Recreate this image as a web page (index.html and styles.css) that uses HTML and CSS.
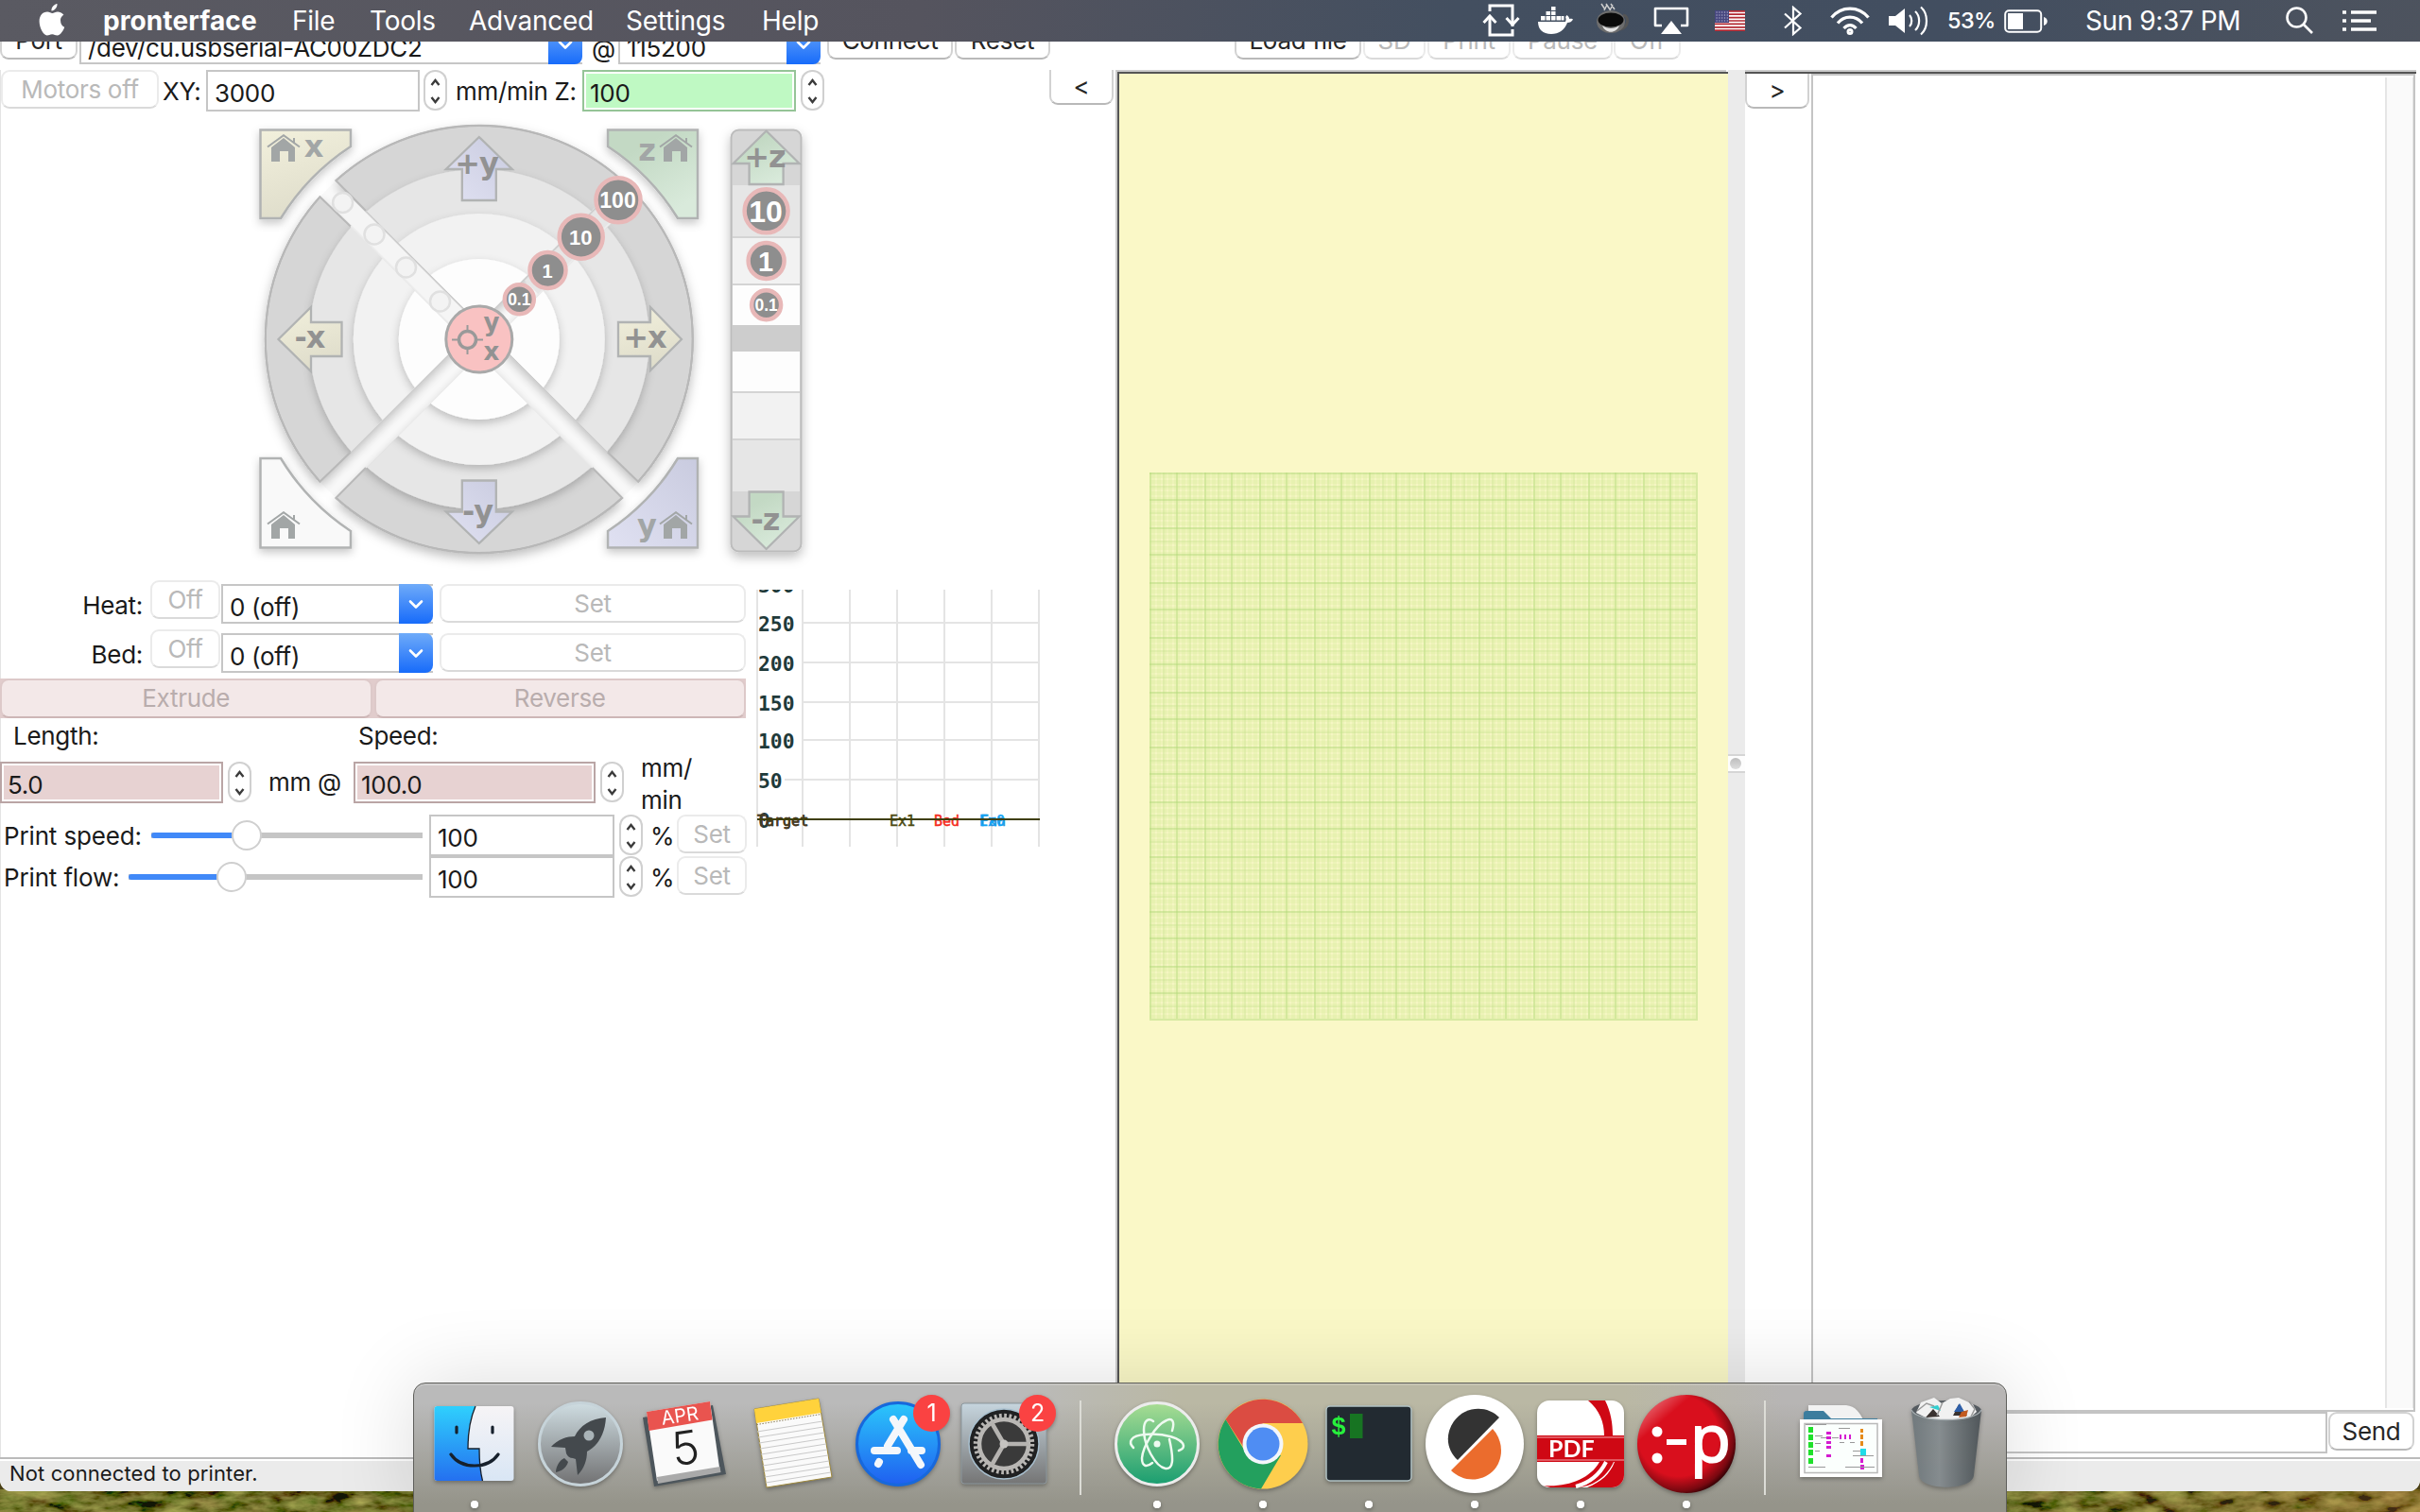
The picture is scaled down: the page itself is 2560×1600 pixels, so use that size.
FILE: index.html
```html
<!DOCTYPE html>
<html lang="en">
<head>
<meta charset="utf-8">
<title>pronterface</title>
<link rel="stylesheet" href="styles.css">
</head>
<body>
<svg class="defs" width="0" height="0" aria-hidden="true">
  <symbol id="updown" viewBox="0 0 25 43"><path d="M8.5 16l4-5 4 5M8.5 29l4 5 4-5" fill="none" stroke="#3c3c3c" stroke-width="2.4"/></symbol>
  <symbol id="chev" viewBox="0 0 36 42"><path d="M12 18.500l6 6 6-6" fill="none" stroke="#fff" stroke-width="2.6" stroke-linecap="round" stroke-linejoin="round"/></symbol>
  <symbol id="house" viewBox="0 0 36 30"><path d="M5 29V14L18 4l12 10v15h-7V18h-9v11z"/><path d="M1 13.500L18 1.200 35 13.500M29 4v6" fill="none" stroke="#a2a6a6" stroke-width="2"/></symbol>
</svg>

<svg class="wallpaper" width="2560" height="24">
  <defs>
    <filter id="grass" x="0" y="0" width="100%" height="100%">
      <feTurbulence type="fractalNoise" baseFrequency="0.035 0.09" numOctaves="4" seed="8"/>
      <feColorMatrix values="1.1 0.3 0 0 -0.44  0.9 0.5 0 0 -0.46  0.3 0.1 0 0 -0.16  0 0 0 0 1"/>
    </filter>
    <linearGradient id="earth"><stop offset=".83" stop-color="#3c4a12" stop-opacity=".3"/><stop offset="1" stop-color="#8a5a28" stop-opacity=".5"/></linearGradient>
  </defs>
  <rect width="2560" height="24" filter="url(#grass)"/>
  <rect width="2560" height="24" fill="url(#earth)"/>
</svg>

<header class="menubar">
  <svg class="apple" width="28" height="34" viewBox="0 0 28 34"><path fill="#fff" d="M19.500 0c.3 3.800-2.800 7.500-6 7.400C13 4 16 .6 19.500 0zM23 17.500c0-3.600 2.700-5.200 3.400-5.700-1.800-2.700-4.700-3.200-6-3.300-2.500-.2-4.600 1.500-6 1.500-1.300 0-3.200-1.400-5.300-1.400C4 8.700.6 12.500.6 18.600.6 25.500 5 33.500 8.700 33.500c2 0 3-1.300 5.500-1.300 2.400 0 3.200 1.300 5.300 1.300 3.600 0 6.900-6 7.700-8.700-2.300-.9-4.200-3.300-4.200-7.300z"/></svg>
  <nav class="menus">
    <b class="m-app">pronterface</b><span class="m-file">File</span><span class="m-tools">Tools</span><span class="m-adv">Advanced</span><span class="m-set">Settings</span><span>Help</span>
  </nav>
  <div class="tray">
    <svg width="40" height="36" viewBox="0 0 40 36" fill="none" stroke="#fff" stroke-width="3"><path d="M8 8V2h24v22M32 27v6H8V14"/><path d="M1.500 20L8 13l6.500 7M25.500 15l6.500 7 6.500-7" /></svg>
    <svg class="t-docker" width="38" height="30" viewBox="0 0 38 30" fill="#fff"><path d="M0 16h29c1-2 .5-4 0-5l1.500-2c2 1 2.500 3 2.500 4 2-.5 3.500 0 4 .5-1 2.500-3.500 3.500-6 3.500C28 25 22 29 14 29 5 29 0 24 0 16z"/><path d="M3 10h4.500v4.500H3zM8.500 10H13v4.500H8.500zM14 10h4.500v4.500H14zM19.500 10H24v4.500h-4.500zM8.500 5H13v4H8.500zM14 5h4.500v4H14zM14 0h4.500v4H14zM24.500 10h3v4.500h-3z"/></svg>
    <svg class="t-bowl" width="40" height="34" viewBox="0 0 40 34"><path d="M31 13c7 1 6 13-3 15" fill="none" stroke="#555" stroke-width="3"/><ellipse cx="18" cy="20" rx="15" ry="12" fill="#6d6d6d"/><ellipse cx="18" cy="18" rx="13.500" ry="7.500" fill="#0a0a0a"/><path d="M9 24c3 9 15 9 18 0-5 4-13 4-18 0z" fill="#e4e4e4"/><path d="M8 1l4 6M13 1l4 6M18 1l4 6M11 8l3-6M17 8l3-6" stroke="#ccc" stroke-width="1.500"/></svg>
    <svg class="t-air" width="38" height="30" viewBox="0 0 38 30"><path d="M9 20H2V2h34v18h-7" fill="none" stroke="#fff" stroke-width="2.600" stroke-linejoin="round"/><path d="M19 15l11 14H8z" fill="#fff"/></svg>
    <svg class="t-flag" width="32" height="22" viewBox="0 0 32 22"><path fill="#fff" d="M0 0h32v22H0z"/><path stroke="#b22a33" stroke-width="1.700" d="M0 .85h32M0 4.200h32M0 7.600h32M0 11h32M0 14.400h32M0 17.800h32M0 21.150h32"/><path fill="#46467f" d="M0 0h15v13H0z"/><path stroke="#c9c9dd" stroke-width="1.200" stroke-dasharray="1.200 1.600" d="M1.500 2h13M1.500 5h13M1.500 8h13M1.500 11h13"/></svg>
    <svg class="t-bt" width="20" height="32" viewBox="0 0 20 32" fill="none" stroke="#fff" stroke-width="2.200"><path d="M1 8.500l16.500 15L10 30V2l7.500 6.500L1 23.500"/></svg>
    <svg class="t-wifi" width="42" height="30" viewBox="0 0 42 30" fill="none" stroke="#fff" stroke-width="3.300"><path d="M1.500 11.500C12 -1 30 -1 40.500 11.500M8 17.500c7-8.500 19-8.500 26 0M14.500 23c4-4.500 9-4.500 13 0"/><circle cx="21" cy="26.500" r="2" stroke-width="3"/></svg>
    <svg class="t-vol" width="42" height="32" viewBox="0 0 42 32"><path fill="#fff" d="M0 11h7l10-8v26l-10-8H0z"/><path fill="none" stroke="#fff" stroke-width="2.200" d="M22 10c3 3 3 9 0 12M28 6c5.500 5 5.500 15 0 20M34 1.500c8 7 8 22 0 29"/></svg>
    <span class="t-pct">53%</span>
    <svg class="t-bat" width="46" height="25" viewBox="0 0 46 25"><rect x="1.200" y="1.200" width="38" height="22.500" rx="4" fill="none" stroke="#fff" stroke-width="2"/><path fill="#fff" d="M4 4h16v17H4zM42 8c5 1 5 8 0 9z"/></svg>
    <span class="t-clock">Sun 9:37 PM</span>
    <svg class="t-search" width="30" height="30" viewBox="0 0 30 30" fill="none" stroke="#fff" stroke-width="2.600"><circle cx="11.500" cy="11.500" r="10"/><path d="M18.500 18.500L28 28"/></svg>
    <svg class="t-list" width="36" height="22" viewBox="0 0 36 22"><path stroke="#fff" stroke-width="3.300" d="M0 2h4M9 2h27M0 11h4M9 11h21M0 20h4M9 20h27"/></svg>
  </div>
</header>

<main class="window">
  <div class="toolbar">
    <button class="btn w-port">Port</button>
    <div class="combo c-port"><span>/dev/cu.usbserial-AC00ZDC2</span><i><svg width="36" height="42"><use href="#chev"/></svg></i></div>
    <span class="at">@</span>
    <div class="combo c-baud"><span>115200</span><i><svg width="36" height="42"><use href="#chev"/></svg></i></div>
    <button class="btn w-connect">Connect</button>
    <button class="btn w-reset">Reset</button>
    <button class="btn w-load">Load file</button>
    <button class="btn off w-sd">SD</button>
    <button class="btn off w-print">Print</button>
    <button class="btn off w-pause">Pause</button>
    <button class="btn off w-off">Off</button>
  </div>

  <div class="panes">
    <section class="left">
      <div class="row feed">
        <button class="btn off w-motors">Motors off</button>
        <label class="l-xy">XY:</label>
        <div class="field f-xy">3000</div>
        <svg class="spin" width="25" height="43"><use href="#updown"/></svg>
        <label class="l-z">mm/min Z:</label>
        <div class="field tint green f-z"><span>100</span></div>
        <svg class="spin" width="25" height="43"><use href="#updown"/></svg>
        <button class="btn fold">&lt;</button>
      </div>

      <svg class="jog" width="600" height="496" viewBox="260 118 600 496">
        <defs>
          <filter id="sh" x="-20%" y="-20%" width="140%" height="140%"><feDropShadow dx="0" dy="5" stdDeviation="6" flood-color="#000" flood-opacity=".26"/></filter>
          <filter id="shs" x="-20%" y="-20%" width="140%" height="140%"><feDropShadow dx="0" dy="4" stdDeviation="5" flood-color="#000" flood-opacity=".22"/></filter>
          <linearGradient id="yel" x1="0" y1="0" x2=".3" y2="1"><stop stop-color="#f2f0dc"/><stop offset="1" stop-color="#dfddcb"/></linearGradient>
          <linearGradient id="grn" x1="0" y1="0" x2=".6" y2="1"><stop offset=".3" stop-color="#c3d9c4"/><stop offset="1" stop-color="#d9eadb"/></linearGradient>
          <linearGradient id="blu" x1="1" y1="0" x2="0" y2="1"><stop stop-color="#c9cbdf"/><stop offset="1" stop-color="#e0e1f2"/></linearGradient>
          <clipPath id="quads"><path d="M506.800 342L206.800 42h600zM506.800 376l-300 300h600zM489.800 359l-300-300v600zM523.800 359l300-300v600z"/></clipPath>
          <clipPath id="disc"><circle cx="506.800" cy="359" r="226"/></clipPath>
        </defs>
        <g clip-path="url(#disc)"><path d="M346.800 199l320 320M666.800 199l-320 320" stroke="#fafafa" stroke-width="30"/></g>
        <g filter="url(#sh)">
          <g clip-path="url(#quads)">
            <circle cx="506.800" cy="359" r="226" fill="#d6d6d6" stroke="#b4b4b4" stroke-width="2"/>
            <g filter="url(#shs)"><circle cx="506.800" cy="359" r="180" fill="#e6e6e6"/></g>
            <g filter="url(#shs)"><circle cx="506.800" cy="359" r="133" fill="#f2f2f2"/></g>
            <g filter="url(#shs)"><circle cx="506.800" cy="359" r="85" fill="#fdfdfd"/></g>
          </g>
        </g>
        <g fill="none" stroke="#b8b8b8" stroke-width="2">
          <path d="M387 223L355.300 191A226 226 0 0 1 658.300 191M370.800 239.500L338.400 208.300A226 226 0 0 0 338.400 509.700L370.800 478.500M387 495L355.300 527A226 226 0 0 0 658.300 527L626.600 495M642.800 478.500L675.200 509.700A226 226 0 0 0 675.200 208.300"/>
        </g>
        <path d="M362 214l120 120" stroke="#f5f5f5" stroke-width="20" stroke-linecap="round"/>
        <path d="M562 304L664 202" stroke="#e6e6e6" stroke-width="20"/>
        <g fill="#f3f3f3" stroke="#e0e0e0" stroke-width="2.500"><circle cx="362.600" cy="214.500" r="10.500"/><circle cx="396" cy="248" r="10.500"/><circle cx="429.500" cy="283" r="10.500"/><circle cx="465.500" cy="319" r="10.500"/></g>
        <g filter="url(#shs)" stroke="#b1b3b3" stroke-width="2.500">
          <path fill="url(#yel)" d="M275.500 137.500H371V155A245 245 0 0 0 297 231H275.500z"/>
          <path fill="url(#grn)" d="M738 137.500H643V155A245 245 0 0 1 717 231H738z"/>
          <path fill="#f9f9f9" d="M275.500 579.500H371V562A245 245 0 0 1 297 485H275.500z"/>
          <path fill="url(#blu)" d="M738 579.500H643V562A245 245 0 0 0 717 485H738z"/>
        </g>
        <g stroke="#b1b3b3" stroke-width="2.300">
          <path fill="url(#blu)" d="M506.800 145l35 34h-17v33h-36v-33h-17z"/>
          <path fill="url(#blu)" d="M506.800 575l35-33.500h-17v-33h-36v33h-17z"/>
          <path fill="url(#yel)" d="M721 359l-33-34v16h-34v36h34v15z"/>
          <path fill="url(#yel)" d="M294.500 359l34.500-34v16h32.500v36H329v16z"/>
        </g>
        <g filter="url(#sh)">
          <rect x="773.500" y="137.500" width="74" height="446" rx="8" fill="#d6d6d6" stroke="#bcbcbc" stroke-width="2"/>
        </g>
        <path fill="#e6e6e6" d="M775 196h71v54h-71zM775 465h71v55h-71z"/><path fill="#f2f2f2" d="M775 251h71v50h-71zM775 415h71v50h-71z"/><path fill="#fdfdfd" d="M775 302h71v42h-71zM775 372h71v42h-71z"/><path fill="#cdcdcd" d="M775 344h71v28h-71z"/>
        <path stroke="#d4d4d4" stroke-width="2" d="M775 251h71M775 301h71M775 415h71M775 465h71"/>
        <g stroke="#b1b3b3" stroke-width="2.300" fill="url(#grn)"><path d="M810.600 138.500l35 34.500h-17v22h-36v-22h-17z"/><path d="M810.600 581l35-34.500h-17v-26h-36v26h-17z"/></g>
        <circle cx="506.800" cy="359" r="35" fill="#f9c2c2" stroke="#a9a9a9" stroke-width="3"/>
        <g fill="none" stroke="#999"><circle cx="494.500" cy="359.500" r="9" stroke-width="3.500"/><path stroke-width="2" d="M494.500 344v8M494.500 367v8M478 359.500h8M503 359.500h8"/></g>
        <g fill="#8e8e8e" stroke="#e8b8b8" stroke-width="4.500">
          <circle cx="654" cy="211.700" r="23.500"/><circle cx="614.700" cy="250.700" r="23"/><circle cx="579.500" cy="286" r="19"/><circle cx="549.300" cy="316.700" r="15.500"/>
          <circle cx="810.600" cy="223.300" r="23"/><circle cx="810.600" cy="276" r="19"/><circle cx="810.600" cy="322.700" r="15.500"/>
        </g>
        <g class="step">
          <text x="653.500" y="220" font-size="23">100</text><text x="614.300" y="259" font-size="22">10</text><text x="579" y="293.500" font-size="20">1</text><text x="549.300" y="323" font-size="17.500">0.1</text>
          <text x="810" y="235" font-size="32">10</text><text x="810" y="286.500" font-size="29">1</text><text x="810.600" y="329" font-size="17.500">0.1</text>
        </g>
        <g class="axis">
          <text x="504" y="184">+y</text><text x="505" y="552">-y</text><text x="682" y="368">+x</text><text x="327.500" y="368">-x</text><text x="809" y="176.500">+z</text><text x="809.500" y="561">-z</text>
          <text x="331.500" y="166" fill="#a2a6a6">x</text><text x="684" y="170" fill="#a2a6a6">z</text><text x="684" y="567" fill="#a2a6a6">y</text>
          <text x="519.500" y="349.500" font-size="26">y</text><text x="519.500" y="380.500" font-size="26">x</text>
        </g>
        <g fill="#a2a6a6"><use href="#house" x="282" y="142" width="36" height="30"/><use href="#house" x="697" y="142" width="36" height="30"/><use href="#house" x="282" y="541" width="36" height="30"/><use href="#house" x="697" y="541" width="36" height="30"/></g>
      </svg>

      <div class="lower">
        <div class="controls">
          <div class="row heat">
            <label class="l-heat">Heat:</label><button class="btn off w-hoff">Off</button>
            <div class="combo c-temp"><span>0 (off)</span><i><svg width="36" height="42"><use href="#chev"/></svg></i></div>
            <button class="btn off w-hset">Set</button>
          </div>
          <div class="row heat">
            <label class="l-heat">Bed:</label><button class="btn off w-hoff">Off</button>
            <div class="combo c-temp"><span>0 (off)</span><i><svg width="36" height="42"><use href="#chev"/></svg></i></div>
            <button class="btn off w-hset">Set</button>
          </div>
          <div class="extrude"><button class="btn off">Extrude</button><button class="btn off">Reverse</button></div>
          <div class="row caps"><label>Length:</label><label class="l-speed">Speed:</label></div>
          <div class="row amount">
            <div class="field tint rose f-len"><span>5.0</span></div><svg class="spin" width="25" height="43"><use href="#updown"/></svg>
            <label class="l-mm">mm @</label>
            <div class="field tint rose f-speed"><span>100.0</span></div><svg class="spin" width="25" height="43"><use href="#updown"/></svg>
            <label class="l-mmin">mm/<br>min</label>
          </div>
          <div class="row rate">
            <label class="l-ps">Print speed:</label><div class="slider s-speed"><b></b><i></i></div>
            <div class="field f-rate">100</div><svg class="spin" width="25" height="43"><use href="#updown"/></svg><label class="l-pct">%</label><button class="btn off w-rset">Set</button>
          </div>
          <div class="row rate">
            <label class="l-pf">Print flow:</label><div class="slider s-flow"><b></b><i></i></div>
            <div class="field f-rate">100</div><svg class="spin" width="25" height="43"><use href="#updown"/></svg><label class="l-pct">%</label><button class="btn off w-rset">Set</button>
          </div>
        </div>
        <svg class="graph" width="304" height="272" viewBox="800 624 304 272">
          <path stroke="#e4e4e4" stroke-width="2" d="M801 624v272M849 624v272M899 624v272M949 624v272M999 624v272M1049 624v272M1099 624v272M850 659h250M850 701h250M850 743h250M850 783h250M830 825h270"/>
          <g class="ticks"><text x="802" y="627">300</text><text x="802" y="668">250</text><text x="802" y="710">200</text><text x="802" y="752">150</text><text x="802" y="792">100</text><text x="802" y="834">50</text><text x="802" y="876">0</text></g>
          <g class="series"><text x="801" y="874" fill="#6a4a6a" stroke="#6a4a6a">Target</text><text x="801" y="873.500" fill="#453c1c" stroke="#453c1c">Target</text><text x="941" y="874" fill="#4d4a12" stroke="#4d4a12">Ex1</text><text x="988" y="874" fill="#f52a20" stroke="#f52a20">Bed</text><text x="1037" y="874" fill="#2a8fd8" stroke="#2a8fd8">Fan</text><text x="1036" y="874" fill="#10a4f6" stroke="#10a4f6">Ex0</text></g>
          <path stroke="#3f3f0c" stroke-width="2" d="M801 867h299"/>
        </svg>
      </div>
    </section>

    <section class="viz">
      <svg width="580" height="580" shape-rendering="crispEdges">
        <defs>
          <pattern id="bars" width="58" height="58" patternUnits="userSpaceOnUse">
            <path fill="#cfe793" fill-opacity=".22" d="M0 0h6v58H0zM8 0h4v58H8zM14 0h4v58h-4zM20 0h4v58h-4zM26 0h6v58h-6zM34 0h4v58h-4zM40 0h4v58h-4zM46 0h4v58h-4zM52 0h4v58h-4z"/>
            <path fill="#b8dc80" fill-opacity=".2" d="M14 0h2v58h-2zM42 0h2v58h-2z"/>
            <path fill="#aad472" fill-opacity=".36" d="M0 0h2v58H0zM28 0h2v58h-2z"/>
          </pattern>
          <pattern id="rows" width="58" height="58" patternUnits="userSpaceOnUse" patternTransform="matrix(0 1 1 0 0 0)">
            <path fill="#cfe793" fill-opacity=".22" d="M0 0h6v58H0zM8 0h4v58H8zM14 0h4v58h-4zM20 0h4v58h-4zM26 0h6v58h-6zM34 0h4v58h-4zM40 0h4v58h-4zM46 0h4v58h-4zM52 0h4v58h-4z"/>
            <path fill="#b8dc80" fill-opacity=".2" d="M14 0h2v58h-2zM42 0h2v58h-2z"/>
            <path fill="#aad472" fill-opacity=".36" d="M0 0h2v58H0zM28 0h2v58h-2z"/>
          </pattern>
        </defs>
        <rect width="580" height="580" fill="#d9edaa" fill-opacity=".14"/>
        <rect width="580" height="580" fill="url(#bars)"/><rect width="580" height="580" fill="url(#rows)"/>
        <path d="M579 0v580M0 579h580" stroke="#d7e9a2" stroke-width="2"/>
      </svg>
    </section>
    <div class="sash"><div class="grip"><i></i></div></div>
    <section class="right">
      <div class="gutter"><button class="btn fold">&gt;</button></div>
      <div class="log">
        <div class="console"><div class="scroll"></div></div>
        <div class="prompt"><div class="cmd"></div><button class="btn w-send">Send</button></div>
      </div>
    </section>
  </div>
  <footer class="status">Not connected to printer.</footer>
</main>

<div class="dock">
  <svg class="app on" viewBox="0 0 112 137"><defs><linearGradient id="fb" x2="0" y2="1"><stop stop-color="#2fd0fd"/><stop offset="1" stop-color="#2470f0"/></linearGradient><linearGradient id="fw" x2="0" y2="1"><stop stop-color="#f6f4f6"/><stop offset="1" stop-color="#d9e6f5"/></linearGradient></defs>
    <rect x="13.500" y="24" width="84" height="79" rx="3" fill="url(#fw)"/><path fill="url(#fb)" d="M16.500 24H57c-7 16-8 32-8 45h12c0 12 1 24 3.500 34h-48a3 3 0 0 1-3-3V27a3 3 0 0 1 3-3z"/><path fill="none" stroke="#16202c" stroke-width="1.300" d="M57 24c-7 16-8 32-8 45h12c0 12 1 24 3.500 34"/><path fill="none" stroke="#16202c" stroke-width="3.200" stroke-linecap="round" d="M37 46v6M75 46v6M31 75c11 16 39 16 50 0"/></svg>
  <svg class="app" viewBox="0 0 112 137"><defs><linearGradient id="lp" x2="0" y2="1"><stop stop-color="#cfdde2"/><stop offset="1" stop-color="#717172"/></linearGradient></defs>
    <circle cx="56" cy="64" r="43.500" fill="url(#lp)" stroke="#c6d3d9" stroke-width="3"/><path fill="#44494d" d="M83 36c-16 1-28 9-33 20-8 0-18 3-25 11l15 1 1 6c1 3 4 5 7 5l3 1 2 17c7-7 10-16 10-25 12-6 19-19 20-36zM39 79c-5 2-9 9-9 15 5-1 11-4 13-11z"/><circle cx="65" cy="55" r="5.500" fill="#a9b3b7"/></svg>
  <svg class="app" viewBox="0 0 112 137"><path fill="#4d565c" d="M10 36l74-13 14 73-76 13z"/><path fill="#fafafa" d="M14 30l67-11 10.500 73L25 103z"/><path fill="#aaa" d="M25 99l66.500-11 1 6L26 106z"/><path fill="#e9544f" d="M14 30l67-11 2.500 19.500L16.500 50z"/><g transform="rotate(-8 50 40)"><text class="cal-m" x="50" y="41">APR</text><text class="cal-d" x="51" y="86">5</text></g></svg>
  <svg class="app" viewBox="0 0 112 137"><path fill="#fafafa" stroke="#a08a3c" stroke-width="1" d="M16 27l68-11 14 83-69 11z"/><path fill="#ffd23c" d="M16 27l68-11 2.500 15L18 42z"/><path stroke="#8a7a50" stroke-dasharray="1.500 1.500" d="M18.500 43.500l68-11"/><path stroke="#c9c9c9" d="M19 51l69-11M20 57l69-11M21 63l69-11M22 69l69-11M23 75l69-11M24 81l69-11M25 87l69-11M26 93l69-11M27 99l69-11M28 105l69-11"/></svg>
  <svg class="app" viewBox="0 0 112 137"><defs><linearGradient id="as" x2="0" y2="1"><stop stop-color="#2bc7fb"/><stop offset="1" stop-color="#1f5ff0"/></linearGradient></defs><circle cx="56" cy="64" r="43.500" fill="url(#as)" stroke="#1768dc" stroke-width="3"/><g stroke="#f4f7fb" stroke-width="8" stroke-linecap="round" fill="none"><path d="M62 38L45 66M51 38l29 48M31 71h24M70 71h11M36 83l-1 2"/></g><circle cx="91.500" cy="31.500" r="19.500" fill="#fa4242"/><text class="badge" x="91.500" y="40">1</text></svg>
  <svg class="app" viewBox="0 0 112 137"><defs><linearGradient id="sp" x2="0" y2="1"><stop stop-color="#c6d5de"/><stop offset="1" stop-color="#757575"/></linearGradient></defs><rect x="11" y="21" width="90" height="85" rx="3" fill="url(#sp)" stroke="#8b979d"/><circle cx="56" cy="64" r="37" fill="#202122" stroke="#a9c0cf" stroke-width="1.500"/><circle cx="56" cy="64" r="26" fill="#3a3a3a" stroke="#b9b7b4" stroke-width="4.500"/><circle cx="56" cy="64" r="30" fill="none" stroke="#b9b7b4" stroke-width="4.500" stroke-dasharray="2.700 2.536"/><path stroke="#b5b3b0" stroke-width="4.500" d="M56 64h26M56 64L43 41.500M56 64L43 86.500"/><circle cx="56" cy="64" r="4.500" fill="#c5c3c0"/><circle cx="91.500" cy="31.500" r="19.500" fill="#fa4242"/><text class="badge" x="91.500" y="40">2</text></svg>
  <div class="sep"></div>
  <svg class="app on" viewBox="0 0 112 137"><defs><linearGradient id="at" x2="0" y2="1"><stop stop-color="#a9dd93"/><stop offset="1" stop-color="#199d70"/></linearGradient></defs><circle cx="56" cy="64" r="43.500" fill="url(#at)" stroke="#ececec" stroke-width="3"/><g fill="none" stroke="#eefaf0" stroke-width="2.500" stroke-linecap="round"><path d="M31 68c-6-6-3-13 12-14 20-2 40 4 41 12 0 2-2 4-5 5"/><path d="M72 50c3-10 0-14-6-11-12 5-25 28-26 40 0 9 5 10 11 5"/><path d="M52 40c-5-4-10-1-10 9 0 16 12 39 23 41 8 1 9-9 4-31"/></g><circle cx="56" cy="64" r="3.500" fill="#eefaf0"/></svg>
  <svg class="app on" viewBox="0 0 112 137"><circle cx="56" cy="64" r="47.500" fill="#fece4d"/><path fill="#db4c42" d="M16.500 38A47.500 47.500 0 0 1 98 42H56L36 68z"/><path fill="#23a05e" d="M16.500 38A47.500 47.500 0 0 0 54 111.500L75 76 36 70z"/><circle cx="56" cy="64" r="21.500" fill="#f3f6fb"/><circle cx="56" cy="64" r="17.500" fill="#4f8df3"/></svg>
  <svg class="app on" viewBox="0 0 112 137"><rect x="11" y="24" width="90" height="79" rx="4" fill="#222a31" stroke="#b3c3c5" stroke-width="1.500"/><rect x="36" y="32" width="13.500" height="26" fill="#177422"/><text class="term" x="16" y="54">$</text></svg>
  <svg class="app on" viewBox="0 0 112 137"><circle cx="56" cy="64" r="52" fill="#fff"/><path fill="#333" d="M82 36C70 23 46 23 34 40c-11 16-6 32 4 41z"/><path fill="#eb6c2d" d="M75 48c12 13 12 33 0 45-13 12-32 11-44-1z"/></svg>
  <svg class="app on" viewBox="0 0 112 137"><rect x="10" y="18" width="92" height="92" rx="13" fill="#fff"/><path fill="#cf0814" d="M64 18h18c6 12 8 24 8 37h-9c0-14-5-27-17-37zM10 55h92v28H10zM76 83h15c-6 14-20 25-36 27H24l-7-2c25 2 49-7 59-25z"/><path fill="#cf0814" d="M92 83h10v14a13 13 0 0 1-13 13H63c15-6 24-14 29-27z"/><path stroke="#f4a6aa" stroke-width="1" d="M10 57h92M10 81h92"/><path stroke="#fff" stroke-width="4" fill="none" d="M83 83c-6 12-17 22-32 26"/><text class="pdf" x="22" y="78">PDF</text></svg>
  <svg class="app on" viewBox="0 0 112 137"><defs><radialGradient id="pp" cx=".42" cy=".42" r=".62"><stop offset=".66" stop-color="#d90f1d"/><stop offset=".9" stop-color="#780810"/><stop offset="1" stop-color="#2b0003"/></radialGradient><linearGradient id="ph" x2=".6" y2=".7"><stop stop-color="#fff" stop-opacity=".6"/><stop offset=".4" stop-color="#fff" stop-opacity="0"/></linearGradient></defs><circle cx="56" cy="64" r="52" fill="url(#pp)"/><circle cx="56" cy="64" r="52" fill="url(#ph)"/><g fill="#fff"><circle cx="25" cy="51" r="5.500"/><circle cx="25" cy="79" r="5.500"/><path d="M35 59h21v6H35z"/></g><text class="pee" x="60" y="83">p</text></svg>
  <div class="sep sep-end"></div>
  <svg class="app" viewBox="0 0 112 137"><path fill="#f2f2f2" d="M22 23h40c10 1 14 8 18 15H22z"/><path fill="#3c7d9e" d="M17 32a3 3 0 0 1 3-3h18l8 8h49v8H17z"/><rect x="13" y="38" width="87" height="61" fill="#fff"/><rect x="18" y="42.500" width="77" height="52" fill="#fbfffd" stroke="#b9b9b9" stroke-width="1.500"/><path fill="#1fe02b" d="M22 46h5v6h-5zM22 54h5v6h-5zM22 62h5v6h-5zM22 70h5v6h-5zM22 79h5v6h-5z"/><path fill="#d41bd0" d="M41 51h5v3h-5zM41 56h5v3h-5zM41 61h5v3h-5zM41 66h5v3h-5zM41 75h5v3h-5zM55 54h2v5h-2zM60 54h2v5h-2zM65 54h2v5h-2zM77 79h3v5h-3zM77 86h4v5h-4z"/><path fill="#e58a1a" d="M77 48h3v4h-3zM77 54h3v5h-3zM77 61h3v5h-3z"/><path fill="#22dbe8" d="M77 69h6v8h-6z"/><path stroke="#999" d="M19 43.500h22M29 55.500h8M29 63.500h6M35 57.500h6M47 57.500h7M29 71.500h5M69 71.500h8M69 76.500h22M61 88.500h31M54 47.500h12M55 62.500h5M66 62.500h5M22 88.500h18"/></svg>
  <svg class="app" viewBox="0 0 112 137"><defs><linearGradient id="tr"><stop stop-color="#6f787c"/><stop offset=".4" stop-color="#868d90"/><stop offset="1" stop-color="#4c5357"/></linearGradient></defs><ellipse cx="56" cy="29" rx="37" ry="11" fill="#555b60"/><path fill="#f1f1f1" d="M24 31l5-11 14-5 8 6 9-5 9-1 15 7 4 8-9 8H38z"/><path fill="#3a3230" d="M34 36l8-9 7 8zM63 34l6-12 9 12z"/><path fill="#2e5fa8" d="M64 30l6-9 5 9z"/><path fill="#32cfd0" d="M38 25l9-2 3 6z"/><path fill="#c25a20" d="M72 30l7-2-2 7-8 1z"/><path stroke="#999" stroke-width="1.500" fill="none" d="M25 29l10-8 8 3M80 19l6 8-4 8M52 20l-6 14"/><path fill="url(#tr)" fill-opacity=".95" d="M19 28c6 14 68 14 74 0l-8 69c-1 17-57 17-58 0z"/><path fill="none" stroke="#a3abae" stroke-width="1.300" d="M19 28c6 14 68 14 74 0"/></svg>
</div>
</body>
</html>
```
FILE: styles.css
```css
* { box-sizing: border-box; }
body {
  margin: 0; width: 2560px; height: 1600px; overflow: hidden; position: relative;
  display: flex; flex-direction: column;
  font: 26px/32px Inter, "Liberation Sans", sans-serif; letter-spacing: -0.3px; color: #1a1a1a; background: #4a4016;
}
svg { display: block; flex: none; }
.defs { position: absolute; }
.wallpaper { position: absolute; left: 0; bottom: 0; }

/* menu bar */
.menubar { height: 44px; flex: none; display: flex; align-items: center; color: #fff; font-size: 28px; letter-spacing: -0.25px;
  background: linear-gradient(100deg, #5a5a62 0, #55545e 38%, #434f60 60%, #424e60 80%, #4d535e 100%); position: relative; }
.apple { margin: -3px 40px 0 41px; }
.menus { display: flex; white-space: nowrap; }
.m-app { width: 200px; font-weight: 700; letter-spacing: 0.1px; }
.m-file { width: 82px; } .m-tools { width: 105px; } .m-adv { width: 166px; } .m-set { width: 144px; }
.tray { display: flex; align-items: center; margin-left: auto; padding-right: 46px; white-space: nowrap; }
.t-docker { margin-left: 19px; } .t-bowl { margin-left: 21px; margin-top: -5px; } .t-air { margin-left: 23px; }
.t-flag { margin-left: 27px; } .t-bt { margin-left: 41px; } .t-wifi { margin-left: 29px; } .t-vol { margin-left: 20px; }
.t-pct { margin-left: 20px; width: 60px; font-size: 23.500px; font-weight: 500; letter-spacing: -0.6px; }
.t-clock { margin-left: 40px; width: 166px; font-size: 28px; letter-spacing: -0.4px; }
.t-search { margin-left: 46px; } .t-list { margin-left: 30px; }

/* window */
.window { height: 1534px; display: flex; flex-direction: column; background: #fff; border-radius: 0 0 12px 12px; overflow: hidden; position: relative; }
.row { display: flex; align-items: flex-start; }
label { white-space: nowrap; flex: none; }
.btn { height: 41px; flex: none; padding: 0; font: inherit; letter-spacing: inherit; color: #262626; background: #fff; white-space: nowrap;
  border: 2px solid #d2d2d2; border-bottom-color: #b9b9b9; border-radius: 9px; }
.btn.off { color: #b9b9b9; border-color: #ebebeb; border-bottom-color: #dadada; }
.combo { height: 42px; flex: none; display: flex; justify-content: space-between; border: 2px solid #c6c6c6; border-right: 0; background: #fff; }
.combo span { padding: 7px 0 0 7px; white-space: nowrap; }
.combo i { width: 36px; height: 42px; margin-top: -2px; border-radius: 0 8px 8px 0; background: linear-gradient(#6fabf9, #176bfa); }
.field { height: 44px; flex: none; border: 2px solid #c6c6c6; padding: 7px 0 0 7px; background: #fff; }
.spin { border-radius: 12px; background: #fff; box-shadow: inset 0 0 0 2px #d0d0d0; margin-left: 4px; }
.tint { padding: 2px; }
.tint span { display: block; height: 36px; padding: 5px 0 0 4px; }
.green { border-color: #95c497; } .green span { background: #bff9c3; }
.rose { border-color: #baa5a5; } .rose span { background: #e7d2d2; }

.toolbar { height: 30px; flex: none; display: flex; align-items: flex-end; padding-bottom: 6px; }
.toolbar .btn { margin-bottom: 5px; padding-top: 1px; }
.w-port { width: 82px; } .c-port { width: 532px; margin-left: 2px; } .at { width: 38px; padding-left: 10px; }
.c-baud { width: 214px; } .w-connect { width: 133px; margin-left: 7px; } .w-reset { width: 101px; margin-left: 2px; }
.w-load { width: 134px; margin-left: 195px; } .w-sd { width: 66px; margin-left: 2px; } .w-print { width: 88px; margin-left: 2px; }
.w-pause { width: 106px; margin-left: 2px; } .w-off { width: 71px; margin-left: 1px; }

.panes { height: 1468px; flex: none; display: flex; }
.left { width: 1180px; flex: none; border-left: 1px solid #e4e4e4; }
.feed { height: 44px; }
.feed label { padding-top: 7px; }
.w-motors { width: 167px; } .l-xy { width: 50px; padding-left: 4px; } .f-xy { width: 226px; }
.l-z { width: 143px; padding-left: 9px; } .f-z { width: 226px; }
.fold { width: 68px; height: 37px; border-top: 0; border-radius: 0 0 9px 9px; }
.feed .fold { margin: 0 2px 0 auto; }
.feed .f-z + .spin { margin-left: 5px; }
.jog { margin-left: 259px; }
.step { font-family: "Liberation Sans"; font-weight: 700; fill: #fff; text-anchor: middle; letter-spacing: 0; }
.axis { font-family: "DejaVu Sans"; font-weight: 700; font-size: 32px; fill: #929292; text-anchor: middle; letter-spacing: -1px; }

.lower { display: flex; margin-left: -1px; }
.controls { width: 800px; flex: none; }
.heat { height: 52px; }
.heat .combo, .w-hset { margin-top: 4px; }
.l-heat { width: 151px; text-align: right; padding-top: 11px; }
.w-hoff { width: 74px; margin-left: 8px; } .c-temp { width: 224px; margin-left: 1px; } .w-hset { width: 324px; margin-left: 7px; }
.extrude { height: 42px; width: 789px; display: grid; grid-template-columns: 1fr 1fr; gap: 2px; background: #e1cccc; padding: 0; }
.extrude .btn.off { background: #f3e8e8; color: #b9adad; border-color: #ddc9c9; border-bottom-color: #cdb6b6; height: 42px; }
.caps { height: 46px; padding: 3px 0 0 14px; }
.l-speed { margin-left: auto; width: 421px; }
.amount { height: 56px; }
.f-len { width: 236px; } .amount .spin { margin-left: 5px; }
.l-mm { width: 108px; padding: 6px 0 0 18px; } .f-speed { width: 256px; }
.l-mmin { margin: -10px 0 0 18px; line-height: 34px; }
.rate { height: 44px; }
.rate label { padding-top: 7px; }
.l-ps { width: 160px; } .l-pf { width: 136px; }
.rate label:first-child { padding-left: 4px; letter-spacing: -0.15px; }
.slider { height: 43px; display: flex; align-items: center; flex: none; margin-right: 7px;
  background: linear-gradient(#c5c5c5, #c5c5c5) 0 50% / 100% 6px no-repeat; }
.s-speed { width: 287px; } .s-flow { width: 311px; }
.slider b { height: 6px; background: #4189f8; border-radius: 3px 0 0 3px; }
.s-speed b { width: 85px; } .s-flow b { width: 93px; }
.slider i { width: 32px; height: 32px; border-radius: 50%; background: #fff; border: 2px solid #cfcfcf; }
.f-rate { width: 196px; } .rate .spin { margin-left: 5px; } .l-pct { width: 36px; } .rate .l-pct { padding-left: 8px; } .w-rset { width: 74px; }
.graph { margin-top: 10px; }
.ticks { font: 700 21.300px "DejaVu Sans Mono"; letter-spacing: 0; fill: #1f3a3a; }
.series { font: 15px "DejaVu Sans Mono"; letter-spacing: 0; stroke-width: .5px; }

.viz { width: 646px; flex: none; margin: 2px 0 0 2px; padding: 422px 0 0 32px; background: #faf8c7;
  border: solid #555; border-width: 2px 0 0 2px; box-shadow: -2px -2px #ccc; }
.sash { width: 18px; flex: none; background: #ebebeb; padding-top: 724px; }
.grip { height: 20px; border: solid #d5d5d5; border-width: 2px 0; background: #fdfdfd; padding: 2px 0 0 2px; }
.grip i { display: block; width: 12px; height: 12px; border-radius: 50%; background: linear-gradient(#bdbdbd, #dedede); }
.right { width: 710px; flex: none; display: flex; border-top: 2px solid #555; margin-top: 2px; box-shadow: 0 -2px #ccc; }
.gutter { width: 70px; flex: none; }
.log { width: 639px; }
.console { height: 1416px; border: 2px solid #c4c4c4; padding: 2px 0 2px; display: flex; justify-content: flex-end; }
.scroll { width: 30px; background: #fafafa; border: solid #e6e6e6; border-width: 0 1px 0 2px; }
.prompt { display: flex; height: 44px; }
.cmd { width: 546px; border: 2px solid #c4c4c4; }
.w-send { width: 91px; margin: 0 0 0 1px; }
.status { flex: 1; border-top: 2px solid #bbb; box-shadow: inset 0 2px #fff; background: #ebebeb; padding: 0 0 0 10px; font-size: 22px; line-height: 30px; letter-spacing: 0.12px; }

/* dock */
.dock { position: absolute; left: 437px; top: 1463px; width: 1686px; height: 140px; display: flex; padding-left: 8px;
  border: 1px solid #5e5e5a; border-radius: 13px 13px 0 0;
  background: linear-gradient(rgba(150,149,138,0) 15%, #95948a 92%), linear-gradient(to right, #bababa 0 38%, #bab8a4 48% 76%, #b7b5b4 86%);
  box-shadow: inset 0 2px rgba(255,255,255,.16), 0 0 85px rgba(0,0,0,.14); }
.app { width: 112px; height: 137px; filter: drop-shadow(0 2px 2px rgba(0,0,0,.3)); letter-spacing: 0; }
.on { background: radial-gradient(circle at 56px 128px, #fff 0 4px, transparent 4.500px); }
.sep { width: 2px; height: 100px; margin: 18px 24px 0; background: #dcdcd6; flex: none; }
.sep-end { margin: 18px 23px 0 26px; }
.badge { font: 25px Inter; fill: #fff; text-anchor: middle; }
.cal-m { font: 20px Inter; fill: #fff; text-anchor: middle; }
.cal-d { font: 300 49px Inter; fill: #222; text-anchor: middle; }
.term { font: 700 27px "Liberation Mono"; fill: #27f03c; }
.pdf { font: 700 25px Lato; fill: #fff; }
.pee { font: 70px "Open Sans"; fill: #fff; stroke: #fff; stroke-width: 2px; }
```
